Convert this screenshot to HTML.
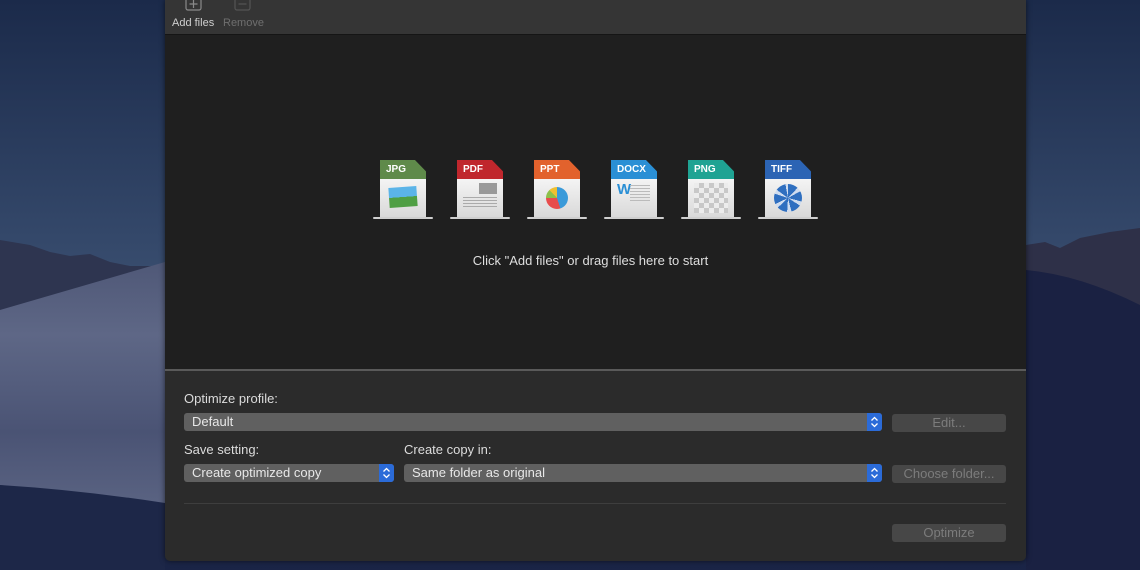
<!DOCTYPE html>
<html><head><meta charset="utf-8"><style>
*{margin:0;padding:0;box-sizing:border-box}
body{width:1140px;height:570px;overflow:hidden;position:relative;font-family:"Liberation Sans",sans-serif;background:#1d2b48}
#bg{position:absolute;left:0;top:0}
.win{position:absolute;left:165px;top:0;width:861px;height:561px;background:#2b2b2b;border-radius:0 0 5px 5px;overflow:hidden;box-shadow:0 0 6px rgba(0,0,0,.6)}
.tb{position:absolute;left:0;top:0;width:861px;height:35px;background:#353535;border-bottom:1px solid #151515}
.tb span{position:absolute;top:17px;font-size:11px}
.content{position:absolute;left:0;top:35px;width:861px;height:334px;background:#1f1f1f}
.sep{position:absolute;left:0;top:369px;width:861px;height:2px;background:#5a5a5a}
.lbl{position:absolute;font-size:13px;color:#dcdcdc}
.pop{position:absolute;height:18px;background:#606060;border-radius:3px;color:#e8e8e8;font-size:13px;line-height:18px;padding-left:8px}
.step{position:absolute;right:0;top:0;width:15px;height:18px;background:#2b6bd8;border-radius:0 3px 3px 0}
.btn{position:absolute;height:18px;background:#474747;border-radius:3px;color:#7c7c7c;font-size:13px;line-height:18px;text-align:center}
.ic{position:absolute;top:160px;width:60px;height:60px}
.ic .hd{position:absolute;left:7px;top:0;width:46px;height:19px;color:#fff;font-weight:bold;font-size:10px;line-height:20px;padding-left:6px;clip-path:polygon(0 0,76% 0,100% 60%,100% 100%,0 100%)}
.ic .bd{position:absolute;left:7px;top:19px;width:46px;height:38px;background:linear-gradient(#f4f4f4,#d9d9d9)}
.ic .base{position:absolute;left:0;top:57px;width:60px;height:2px;background:#cfcfcf;border-radius:1px}
</style></head><body>
<svg id="bg" width="1140" height="570">
<defs>
<linearGradient id="sky" x1="0" y1="0" x2="0" y2="1"><stop offset="0" stop-color="#1b2a4a"/><stop offset=".42" stop-color="#34486a"/><stop offset=".55" stop-color="#3d5272"/><stop offset="1" stop-color="#1a2446"/></linearGradient>
<linearGradient id="dune" x1="0" y1="0" x2="0" y2="1"><stop offset="0" stop-color="#4f5877"/><stop offset=".3" stop-color="#5e6786"/><stop offset=".7" stop-color="#4a5374"/><stop offset="1" stop-color="#5a6382"/></linearGradient>
</defs>
<rect width="1140" height="570" fill="url(#sky)"/>
<path d="M0 240 L30 245 L50 252 L70 256 L90 254 L110 262 L130 266 L165 266 L165 320 L0 320Z" fill="#2e3550"/>
<path d="M0 310 L165 262 L165 505 L0 485Z" fill="url(#dune)"/>
<path d="M0 485 Q80 490 165 503 L165 570 L0 570Z" fill="#1d2748"/>
<path d="M1026 245 L1045 242 L1060 248 L1080 238 L1110 232 L1140 228 L1140 320 L1026 320Z" fill="#2e3048"/>
<path d="M1026 270 Q1080 275 1140 305 L1140 570 L1026 570Z" fill="#1a2142"/>
</svg>
<div class="win">
 <div class="tb">
  <svg style="position:absolute;left:19px;top:0" width="20" height="12"><rect x="2" y="-4" width="15" height="14" rx="2" fill="none" stroke="#8a8a8a" stroke-width="1.2"/><path d="M9.5 0V8M5.5 4H13.5" stroke="#8a8a8a" stroke-width="1.2"/></svg>
  <svg style="position:absolute;left:68px;top:0" width="20" height="12"><rect x="2" y="-4" width="15" height="14" rx="2" fill="none" stroke="#555" stroke-width="1.2"/><path d="M5.5 4H13.5" stroke="#555" stroke-width="1.2"/></svg>
  <span style="left:7px;color:#cfcfcf">Add files</span>
  <span style="left:58px;color:#6f6f6f">Remove</span>
 </div>
 <div class="content">
  <div class="ic" style="left:208px;top:125px"><div class="hd" style="background:#5f8a4a">JPG</div><div class="bd"><div style="position:absolute;left:9px;top:8px;width:28px;height:20px;background:linear-gradient(#5bb4e8 50%,#4f9f44 50%);transform:rotate(-4deg)"></div></div><div class="base"></div></div>
  <div class="ic" style="left:285px;top:125px"><div class="hd" style="background:#c0272d">PDF</div><div class="bd"><div style="position:absolute;left:22px;top:4px;width:18px;height:11px;background:#999"></div><div style="position:absolute;left:6px;top:18px;width:34px;height:12px;background:repeating-linear-gradient(#aaa 0 1px,transparent 1px 3px)"></div></div><div class="base"></div></div>
  <div class="ic" style="left:362px;top:125px"><div class="hd" style="background:#e2622d">PPT</div><div class="bd"><div style="position:absolute;left:12px;top:8px;width:22px;height:22px;border-radius:50%;background:conic-gradient(#3a9ad9 0 45%,#e84c4c 45% 75%,#8cc04a 75% 88%,#f0c030 88%)"></div></div><div class="base"></div></div>
  <div class="ic" style="left:439px;top:125px"><div class="hd" style="background:#2a8fd5">DOCX</div><div class="bd"><div style="position:absolute;left:6px;top:2px;color:#2a8fd5;font-weight:bold;font-size:15px">W</div><div style="position:absolute;left:19px;top:6px;width:20px;height:18px;background:repeating-linear-gradient(#bbb 0 1px,transparent 1px 3px)"></div></div><div class="base"></div></div>
  <div class="ic" style="left:516px;top:125px"><div class="hd" style="background:#1fa393">PNG</div><div class="bd"><div style="position:absolute;left:6px;top:4px;width:34px;height:30px;background:repeating-conic-gradient(#c8c8c8 0 25%,#ececec 0 50%) 0 0/10px 10px"></div></div><div class="base"></div></div>
  <div class="ic" style="left:593px;top:125px"><div class="hd" style="background:#2c64b4">TIFF</div><div class="bd"><div style="position:absolute;left:9px;top:5px;width:28px;height:28px;border-radius:50%;background:conic-gradient(#2f6fc0 0 12%,#cfdcef 12% 17%,#2f6fc0 17% 29%,#cfdcef 29% 34%,#2f6fc0 34% 46%,#cfdcef 46% 51%,#2f6fc0 51% 63%,#cfdcef 63% 68%,#2f6fc0 68% 80%,#cfdcef 80% 85%,#2f6fc0 85% 97%,#cfdcef 97%)"></div></div><div class="base"></div></div>
  <div style="position:absolute;left:0;width:851px;top:218px;text-align:center;color:#dedede;font-size:13px">Click "Add files" or drag files here to start</div>
 </div>
 <div class="sep"></div>
 <div class="lbl" style="left:19px;top:391px">Optimize profile:</div>
 <div class="pop" style="left:19px;top:413px;width:698px">Default<div class="step"><svg width="15" height="18"><path d="M4.5 7.5L7.5 4.5L10.5 7.5M4.5 10.5L7.5 13.5L10.5 10.5" fill="none" stroke="#fff" stroke-width="1.3"/></svg></div></div>
 <div class="btn" style="left:727px;top:414px;width:114px">Edit...</div>
 <div class="lbl" style="left:19px;top:442px">Save setting:</div>
 <div class="lbl" style="left:239px;top:442px">Create copy in:</div>
 <div class="pop" style="left:19px;top:464px;width:210px">Create optimized copy<div class="step"><svg width="15" height="18"><path d="M4.5 7.5L7.5 4.5L10.5 7.5M4.5 10.5L7.5 13.5L10.5 10.5" fill="none" stroke="#fff" stroke-width="1.3"/></svg></div></div>
 <div class="pop" style="left:239px;top:464px;width:478px">Same folder as original<div class="step"><svg width="15" height="18"><path d="M4.5 7.5L7.5 4.5L10.5 7.5M4.5 10.5L7.5 13.5L10.5 10.5" fill="none" stroke="#fff" stroke-width="1.3"/></svg></div></div>
 <div class="btn" style="left:727px;top:465px;width:114px">Choose folder...</div>
 <div style="position:absolute;left:19px;top:503px;width:822px;height:1px;background:#3e3e3e"></div>
 <div class="btn" style="left:727px;top:524px;width:114px">Optimize</div>
</div>
</body></html>
